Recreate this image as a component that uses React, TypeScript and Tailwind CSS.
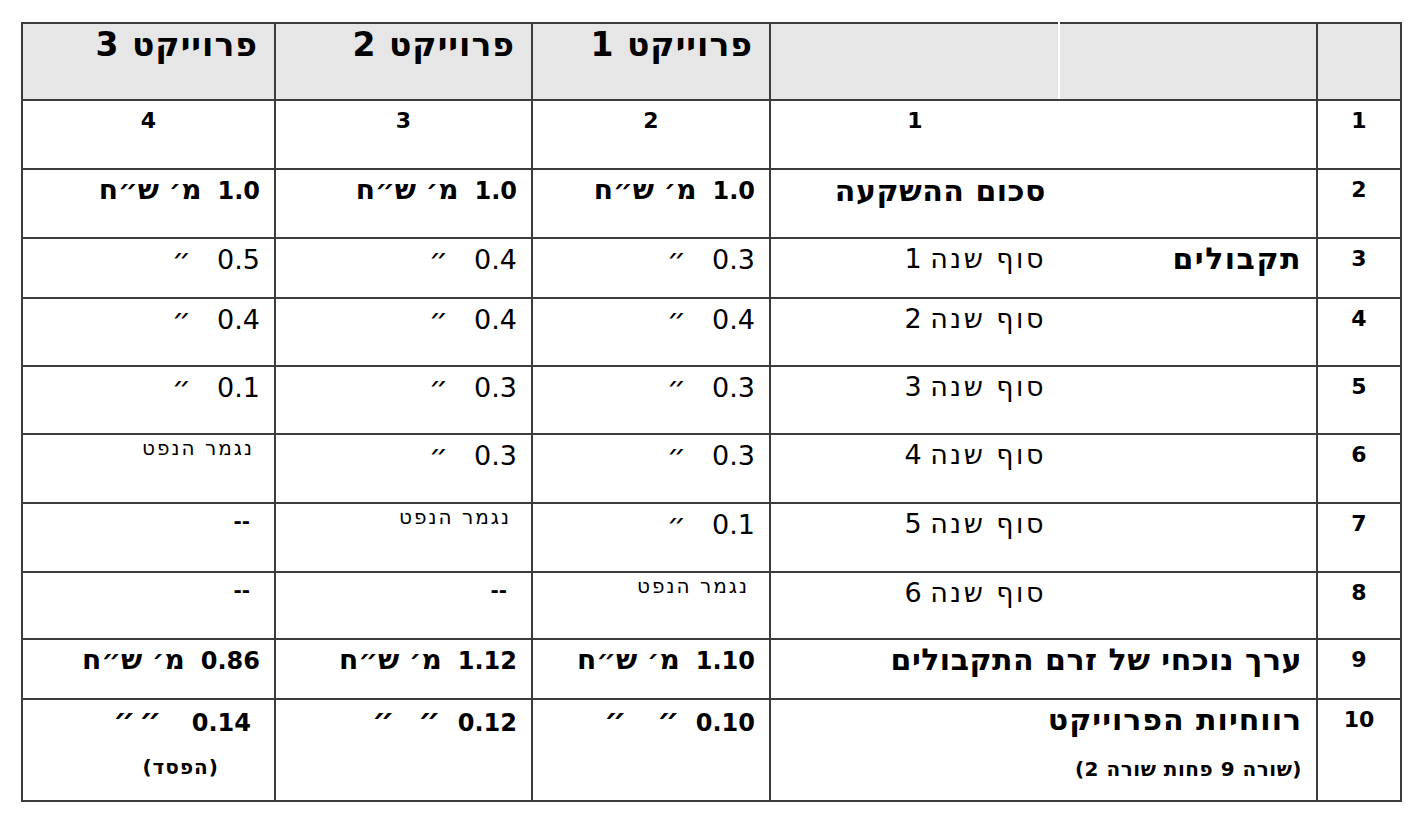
import React from "react";

const hebBold = "font-['DejaVu_Sans',sans-serif] font-bold";
const numBold = "font-['DejaVu_Sans',sans-serif] font-bold";
const reg = "font-['DejaVu_Sans',sans-serif]";

const cellBase = "border-2 border-[#3c3c3c] align-top p-0";

function Quote({ v }: { v: string }) {
  return (
    <div className={`${reg} flex items-baseline gap-[26px] text-[27px] leading-[30px] pr-[14px] pt-[5px] whitespace-nowrap`}>
      <span>{v}</span>
      <span className="text-[30px]">״</span>
    </div>
  );
}

function Oil() {
  return (
    <div className={`${reg} text-[20px] leading-[24px] tracking-[2px] text-right pr-[20px] pt-[1px] whitespace-nowrap`}>
      נגמר הנפט
    </div>
  );
}

function Dash() {
  return (
    <div className={`${numBold} text-[20px] leading-[26px] text-right pr-[24px] pt-[4px]`}>
      --
    </div>
  );
}

function Money({ v }: { v: string }) {
  return (
    <div className="flex items-baseline gap-[16px] pr-[14px] pt-[4px] leading-[32px] whitespace-nowrap">
      <span className={`${numBold} text-[24px]`}>{v}</span>
      <span className={`${hebBold} text-[28px]`}>מ׳ ש״ח</span>
    </div>
  );
}

function Mark({ gap }: { gap: string }) {
  return (
    <span className={`${hebBold} inline-block w-[16px] text-center text-[32px] ${gap}`}>״</span>
  );
}

function Profit({ v, gap1, gap2, pr, sub }: { v: string; gap1: string; gap2: string; pr: string; sub?: string }) {
  return (
    <div className={`pt-[4px] whitespace-nowrap ${pr}`}>
      <div className="flex items-baseline leading-[32px]">
        <span className={`${numBold} text-[24px]`}>{v}</span>
        <Mark gap={gap1} />
        <Mark gap={gap2} />
      </div>
      {sub ? (
        <div className={`${hebBold} text-[20px] leading-[24px] tracking-[1px] pr-[32px] mt-[16px]`}>{sub}</div>
      ) : null}
    </div>
  );
}

function NumCell({ v }: { v: string }) {
  return (
    <div className={`${numBold} text-[22px] leading-[28px] text-center pt-[6px]`}>{v}</div>
  );
}

function Year({ n }: { n: number }) {
  return (
    <div className={`${reg} text-[27px] leading-[30px] text-right pr-[13px] pt-[5px] whitespace-nowrap`}>
      <span className="tracking-[2.5px]">סוף שנה</span> {n}
    </div>
  );
}

const yearRows: { n: number; h: string; cells: React.ReactNode[] }[] = [
  { n: 4, h: "h-[68px]", cells: [<Quote v="0.4" />, <Quote v="0.4" />, <Quote v="0.4" />] },
  { n: 5, h: "h-[68px]", cells: [<Quote v="0.3" />, <Quote v="0.3" />, <Quote v="0.1" />] },
  { n: 6, h: "h-[69px]", cells: [<Quote v="0.3" />, <Quote v="0.3" />, <Oil />] },
  { n: 7, h: "h-[69px]", cells: [<Quote v="0.1" />, <Oil />, <Dash />] },
  { n: 8, h: "h-[67px]", cells: [<Oil />, <Dash />, <Dash />] },
];

const label = `${hebBold} text-[30px] leading-[34px] tracking-[0.5px] text-right whitespace-nowrap`;

export default function App() {
  return (
    <div className="min-h-screen bg-white pt-[22px] pl-[21px]">
      <table dir="rtl" className="table-fixed border-collapse w-[1379px] text-black">
        <colgroup>
          <col className="w-[84px]" />
          <col className="w-[258px]" />
          <col className="w-[289px]" />
          <col className="w-[238px]" />
          <col className="w-[257px]" />
          <col className="w-[253px]" />
        </colgroup>
        <tbody>
          <tr className="h-[77px] bg-[#e6e6e6]">
            <td className={cellBase}></td>
            <td className={`${cellBase} border-l-[2px] border-l-white`}></td>
            <td className={`${cellBase} border-r-[2px] border-r-white`}></td>
            {["פרוייקט 1", "פרוייקט 2", "פרוייקט 3"].map((t) => (
              <td key={t} className={cellBase}>
                <div className={`${hebBold} text-[33px] leading-[38px] tracking-[1px] text-right pr-[16px] pt-[2px] whitespace-nowrap`}>{t}</div>
              </td>
            ))}
          </tr>
          <tr className="h-[69px]">
            <td className={cellBase}><NumCell v="1" /></td>
            <td className={`${cellBase} border-l-0`}></td>
            <td className={`${cellBase} border-r-0`}><NumCell v="1" /></td>
            <td className={cellBase}><NumCell v="2" /></td>
            <td className={cellBase}><NumCell v="3" /></td>
            <td className={cellBase}><NumCell v="4" /></td>
          </tr>
          <tr className="h-[69px]">
            <td className={cellBase}><NumCell v="2" /></td>
            <td className={`${cellBase} border-l-0`}></td>
            <td className={`${cellBase} border-r-0`}>
              <div className={`${label} pr-[13px] pt-[4px]`}>סכום ההשקעה</div>
            </td>
            <td className={cellBase}><Money v="1.0" /></td>
            <td className={cellBase}><Money v="1.0" /></td>
            <td className={cellBase}><Money v="1.0" /></td>
          </tr>
          <tr className="h-[60px]">
            <td className={cellBase}><NumCell v="3" /></td>
            <td className={`${cellBase} border-l-0`}>
              <div className={`${label} tracking-[1.5px] pr-[14px] pt-[3px]`}>תקבולים</div>
            </td>
            <td className={`${cellBase} border-r-0`}><Year n={1} /></td>
            <td className={cellBase}><Quote v="0.3" /></td>
            <td className={cellBase}><Quote v="0.4" /></td>
            <td className={cellBase}><Quote v="0.5" /></td>
          </tr>
          {yearRows.map((r) => (
            <tr key={r.n} className={r.h}>
              <td className={cellBase}><NumCell v={String(r.n)} /></td>
              <td className={`${cellBase} border-l-0`}></td>
              <td className={`${cellBase} border-r-0`}><Year n={r.n - 2} /></td>
              {r.cells.map((c, i) => (
                <td key={i} className={cellBase}>{c}</td>
              ))}
            </tr>
          ))}
          <tr className="h-[60px]">
            <td className={cellBase}><NumCell v="9" /></td>
            <td colSpan={2} className={cellBase}>
              <div className={`${label} pr-[14px] pt-[3px]`}>ערך נוכחי של זרם התקבולים</div>
            </td>
            <td className={cellBase}><Money v="1.10" /></td>
            <td className={cellBase}><Money v="1.12" /></td>
            <td className={cellBase}><Money v="0.86" /></td>
          </tr>
          <tr className="h-[102px]">
            <td className={cellBase}><NumCell v="10" /></td>
            <td colSpan={2} className={cellBase}>
              <div className="text-right pr-[14px] pt-[3px] whitespace-nowrap">
                <div className={`${label} tracking-[1px]`}>רווחיות הפרוייקט</div>
                <div className={`${hebBold} text-[20px] leading-[24px] tracking-[0.5px] mt-[20px]`}>(שורה 9 פחות שורה 2)</div>
              </div>
            </td>
            <td className={cellBase}><Profit v="0.10" gap1="mr-[16px]" gap2="mr-[37px]" pr="pr-[14px]" /></td>
            <td className={cellBase}><Profit v="0.12" gap1="mr-[17px]" gap2="mr-[30px]" pr="pr-[14px]" /></td>
            <td className={cellBase}><Profit v="0.14" gap1="mr-[30px]" gap2="mr-[10px]" pr="pr-[23px]" sub="(הפסד)" /></td>
          </tr>
        </tbody>
      </table>
    </div>
  );
}
